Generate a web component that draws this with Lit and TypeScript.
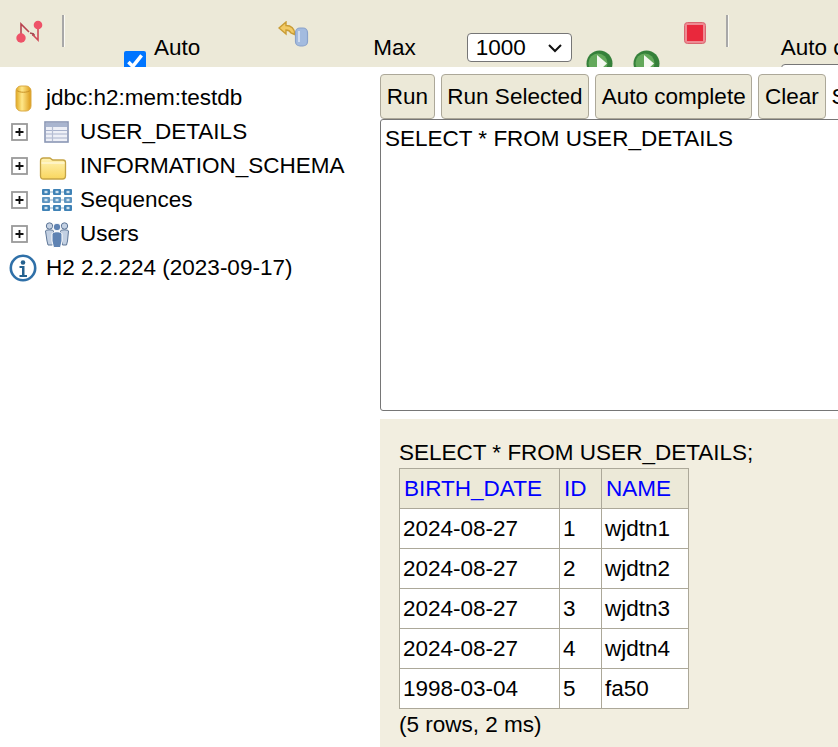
import { LitElement, html, css, svg } from "lit";
import { customElement } from "lit/decorators.js";

const plus = html`<svg class="plus" width="17" height="18" viewBox="0 0 17 18"><rect x="1" y="1" width="15" height="16" fill="#fff" stroke="#9a9a9a" stroke-width="1.800"/><path d="M4.500 9h8M8.500 5v8" stroke="#111" stroke-width="1.800"/></svg>`;

const dbIcon = html`<svg class="ic-db" width="17" height="27" viewBox="0 0 17 27"><defs><linearGradient id="g1" x1="0" x2="1" y1="0" y2="0"><stop offset="0" stop-color="#e0a820"/><stop offset=".4" stop-color="#ffe88a"/><stop offset="1" stop-color="#dc9a18"/></linearGradient></defs><rect x="1" y="1" width="15" height="25" rx="5" fill="url(#g1)" stroke="#dcab45"/><path d="M1.500 5c2 3 12 3 14 0" fill="none" stroke="#c99227" stroke-width="1"/></svg>`;

const tableIcon = html`<svg class="ic-table" width="25" height="22" viewBox="0 0 25 22"><rect x="1" y="1" width="23" height="20" fill="#eef0f7" stroke="#8a97b5" stroke-width="1.600"/><rect x="2" y="2" width="21" height="4" fill="#a9b5cf"/><path d="M2 9.500h21M2 13h21M2 17h21" stroke="#a8b2cc" stroke-width="1.200"/><path d="M8.500 6v14" stroke="#b5bdd2" stroke-width="1.200"/></svg>`;

const folderIcon = html`<svg class="ic-folder" width="28" height="25" viewBox="0 0 28 25"><defs><linearGradient id="g2" x1="0" x2="0" y1="0" y2="1"><stop offset="0" stop-color="#fff3b5"/><stop offset="1" stop-color="#f9d65e"/></linearGradient></defs><path d="M1.500 6c0-2 1-3 3-3h6c1.500 0 2 2 3.500 2h10c1.500 0 2.500 1 2.500 2.500V21c0 2-1 3-3 3H4.500c-2 0-3-1-3-3z" fill="url(#g2)" stroke="#c5a445" stroke-width="1.300"/><path d="M2.500 8h23" stroke="#fff8d8" stroke-width="1.300"/></svg>`;

const seqCells = [0, 11, 22].flatMap((x) => [0, 8, 16].map((y) => svg`<rect x=${x} y=${y} width="8" height="6" rx="1" fill=${y === 8 ? "#5f95c0" : "#3f82b6"}/><rect x=${x + 2.500} y=${y + 1.800} width="3" height="2.400" fill="#cfe2f0"/>`));
const seqIcon = html`<svg class="ic-seq" width="30" height="22" viewBox="0 0 30 22">${seqCells}<path d="M8 3h3M19 3h3M8 11h3M19 11h3M8 19h3M19 19h3" stroke="#86a9c6" stroke-width="1.200"/></svg>`;

const usersIcon = html`<svg class="ic-users" width="26" height="28" viewBox="0 0 26 28"><g fill="#c3d0e2" stroke="#5d7697" stroke-width="1"><circle cx="5.500" cy="6" r="3.200"/><circle cx="20.500" cy="6" r="3.200"/><path d="M1.500 11c0-1.500 8-1.500 8 0v10l-1 4H4l-1-4z"/><path d="M16.500 11c0-1.500 8-1.500 8 0l-1 10-1 4h-4l-1-4z"/></g><g fill="#5f83b3" stroke="#fff" stroke-width="1"><circle cx="13" cy="7" r="3.800"/><path d="M8 14c0-3 10-3 10 0v7l-1.500 6.500h-7L8 21z"/></g></svg>`;

const infoIcon = html`<svg class="ic-info" width="28" height="28" viewBox="0 0 28 28"><circle cx="14" cy="14" r="12.200" fill="#fff" stroke="#2f70a8" stroke-width="2.600"/><circle cx="14" cy="8.500" r="2.300" fill="#24618f"/><path d="M10.500 12h5v9h2.500v2H10.500v-2H13v-7h-2.500z" fill="#24618f"/></svg>`;

const pinsIcon = html`<svg class="ic-pins" width="30" height="24" viewBox="0 0 30 24"><path d="M6 15V4l8 8" fill="none" stroke="#b8424f" stroke-width="1.600"/><path d="M15 13l4 1M17 15l3 0" fill="none" stroke="#a54a52" stroke-width="1.400"/><path d="M23 6v14l-5-5" fill="none" stroke="#cf4a58" stroke-width="1.600"/><circle cx="6" cy="18" r="4.700" fill="#ee5268"/><circle cx="23" cy="5" r="4.300" fill="#ee5268"/></svg>`;

const undoIcon = html`<svg class="ic-undo" width="31" height="26" viewBox="0 0 31 26"><path d="M1 7l7-6v3.500c5 0 9 3 8.500 9L13 12c-1-2-3-3-5-3v4z" fill="#f2ca65" stroke="#c99c35" stroke-width="1.400"/><rect x="17.500" y="7" width="12" height="18" rx="4.500" fill="#a3bbdf" stroke="#8aa2ca" stroke-width="1.200"/><path d="M21 10v11" stroke="#cfdcf0" stroke-width="2"/></svg>`;

const stopIcon = html`<svg class="ic-stop" width="22" height="22" viewBox="0 0 22 22"><rect x="0.500" y="0.500" width="21" height="21" rx="3" fill="#ee8a92" stroke="#d9656f"/><rect x="3" y="3" width="16" height="16" fill="#e9283c"/></svg>`;

const playIcon = (cls: string) => html`<svg class=${cls} width="27" height="27" viewBox="0 0 27 27"><circle cx="13.500" cy="13.500" r="13" fill="#35803a"/><circle cx="12" cy="13" r="9.500" fill="#62a85a"/><path d="M11 5l10 8.500-10 9z" fill="#f4f8f0"/></svg>`;

const rows: [string, string, string][] = [
  ["2024-08-27", "1", "wjdtn1"],
  ["2024-08-27", "2", "wjdtn2"],
  ["2024-08-27", "3", "wjdtn3"],
  ["2024-08-27", "4", "wjdtn4"],
  ["1998-03-04", "5", "fa50"],
];

@customElement("app-root")
export class AppRoot extends LitElement {
  static styles = css`
    :host {
      display: block;
      width: 838px;
      height: 747px;
      overflow: hidden;
      background: #fff;
      font-family: "Liberation Sans", Arial, sans-serif;
      font-size: 22.5px;
      color: #000;
    }
    svg { display: block; flex: none; }
    .toolbar {
      height: 67px;
      background: #ece9d8;
      display: flex;
      align-items: flex-start;
      overflow: hidden;
    }
    .toolbar > * { flex: none; }
    .ic-pins { margin: 20px 0 0 15px; }
    .sep {
      width: 3px; height: 32px; margin: 15px 0 0 17px;
      background: linear-gradient(90deg, #a8a8a8 0 66%, #fbfaf3 66%);
    }
    .check {
      width: 22px; height: 22px; margin: 51px 0 0 59px;
      accent-color: #0075ff;
    }
    .t { line-height: 27px; margin-top: 34px; white-space: nowrap; }
    .t-auto { margin-left: 8px; }
    .ic-undo { margin: 21px 0 0 78px; }
    .t-max { margin-left: 64px; }
    .sel {
      box-sizing: border-box;
      width: 105px; height: 29px; margin: 33px 0 0 51px;
      background: #fff; border: 1px solid #767676; border-radius: 4px;
      padding-left: 8px;
      line-height: 27px;
      display: flex; align-items: center; justify-content: space-between;
    }
    .sel svg { margin-right: 8px; }
    .play1 { margin: 50px 0 0 14px; }
    .play2 { margin: 50px 0 0 20px; }
    .ic-stop { margin: 22px 0 0 24px; }
    .sep2 { margin-left: 20px; }
    .auto-col { margin-left: 52px; }
    .auto-col .t { display: block; }
    .auto-box { width: 120px; height: 20px; margin-top: 3px; background: #fff; border: 1px solid #767676; border-radius: 4px; box-sizing: border-box; }
    .body { display: flex; height: 680px; }
    .tree { width: 380px; flex: none; padding-top: 14px; box-sizing: border-box; }
    .node { height: 34px; display: flex; align-items: center; white-space: nowrap; }
    .plus { margin-left: 11px; }
    .ic-db { margin: 0 14px 0 15px; }
    .ic-table { margin: 0 11px 0 16px; }
    .ic-folder { margin: 2px 13px 0 11px; }
    .ic-seq { margin: 0 8px 0 14px; }
    .ic-users { margin: 0 10px 0 16px; }
    .ic-info { margin: 0 9px 0 9px; }
    .main { flex: 1; min-width: 0; overflow: hidden; }
    .bar { display: flex; gap: 6px; height: 52px; padding-top: 7px; box-sizing: border-box; white-space: nowrap; }
    .btn {
      flex: none; box-sizing: border-box; height: 45px; padding: 0 5.7px;
      display: flex; align-items: center;
      background: #ece9d8; border: 1px solid #aca899; border-radius: 4px;
    }
    .bar-s { flex: none; line-height: 45px; }
    .sql {
      height: 292px; box-sizing: border-box; width: 600px;
      border: 1px solid #767676; border-radius: 3px;
      padding: 5px 4px; line-height: 27px;
    }
    .result {
      margin-top: 8px; height: 328px; background: #f2eee0;
      padding: 18px 0 0 19px; box-sizing: border-box;
    }
    .stmt { line-height: 31px; }
    table { border-collapse: collapse; background: #fff; table-layout: fixed; width: 289px; }
    th, td { border: 1px solid #aca899; height: 40px; padding: 0 3px; text-align: left; font-weight: normal; box-sizing: border-box; white-space: nowrap; }
    th { background: #ece9d8; color: #0000ff; padding-left: 4px; }
    .c1 { width: 160px; }
    .c2 { width: 42px; }
    .c3 { width: 87px; }
    .count { line-height: 31px; }
  `;

  render() {
    return html`
      <div class="toolbar">
        ${pinsIcon}
        <div class="sep"></div>
        <input class="check" type="checkbox" checked />
        <span class="t t-auto">Auto</span>
        ${undoIcon}
        <span class="t t-max">Max</span>
        <div class="sel">1000<svg width="16" height="10" viewBox="0 0 16 10"><path d="M2 2l6 6 6-6" fill="none" stroke="#111" stroke-width="2"/></svg></div>
        ${playIcon("play1")}
        ${playIcon("play2")}
        ${stopIcon}
        <div class="sep sep2"></div>
        <div class="auto-col"><span class="t">Auto complete</span><div class="auto-box"></div></div>
      </div>
      <div class="body">
        <div class="tree">
          <div class="node">${dbIcon}jdbc:h2:mem:testdb</div>
          <div class="node">${plus}${tableIcon}USER_DETAILS</div>
          <div class="node">${plus}${folderIcon}INFORMATION_SCHEMA</div>
          <div class="node">${plus}${seqIcon}Sequences</div>
          <div class="node">${plus}${usersIcon}Users</div>
          <div class="node">${infoIcon}H2 2.2.224 (2023-09-17)</div>
        </div>
        <div class="main">
          <div class="bar">
            <div class="btn">Run</div>
            <div class="btn">Run Selected</div>
            <div class="btn">Auto complete</div>
            <div class="btn">Clear</div>
            <span class="bar-s">SQL statement:</span>
          </div>
          <div class="sql">SELECT * FROM USER_DETAILS</div>
          <div class="result">
            <div class="stmt">SELECT * FROM USER_DETAILS;</div>
            <table>
              <thead><tr><th class="c1">BIRTH_DATE</th><th class="c2">ID</th><th class="c3">NAME</th></tr></thead>
              <tbody>
                ${rows.map((r) => html`<tr><td>${r[0]}</td><td>${r[1]}</td><td>${r[2]}</td></tr>`)}
              </tbody>
            </table>
            <div class="count">(5 rows, 2 ms)</div>
          </div>
        </div>
      </div>
    `;
  }
}
